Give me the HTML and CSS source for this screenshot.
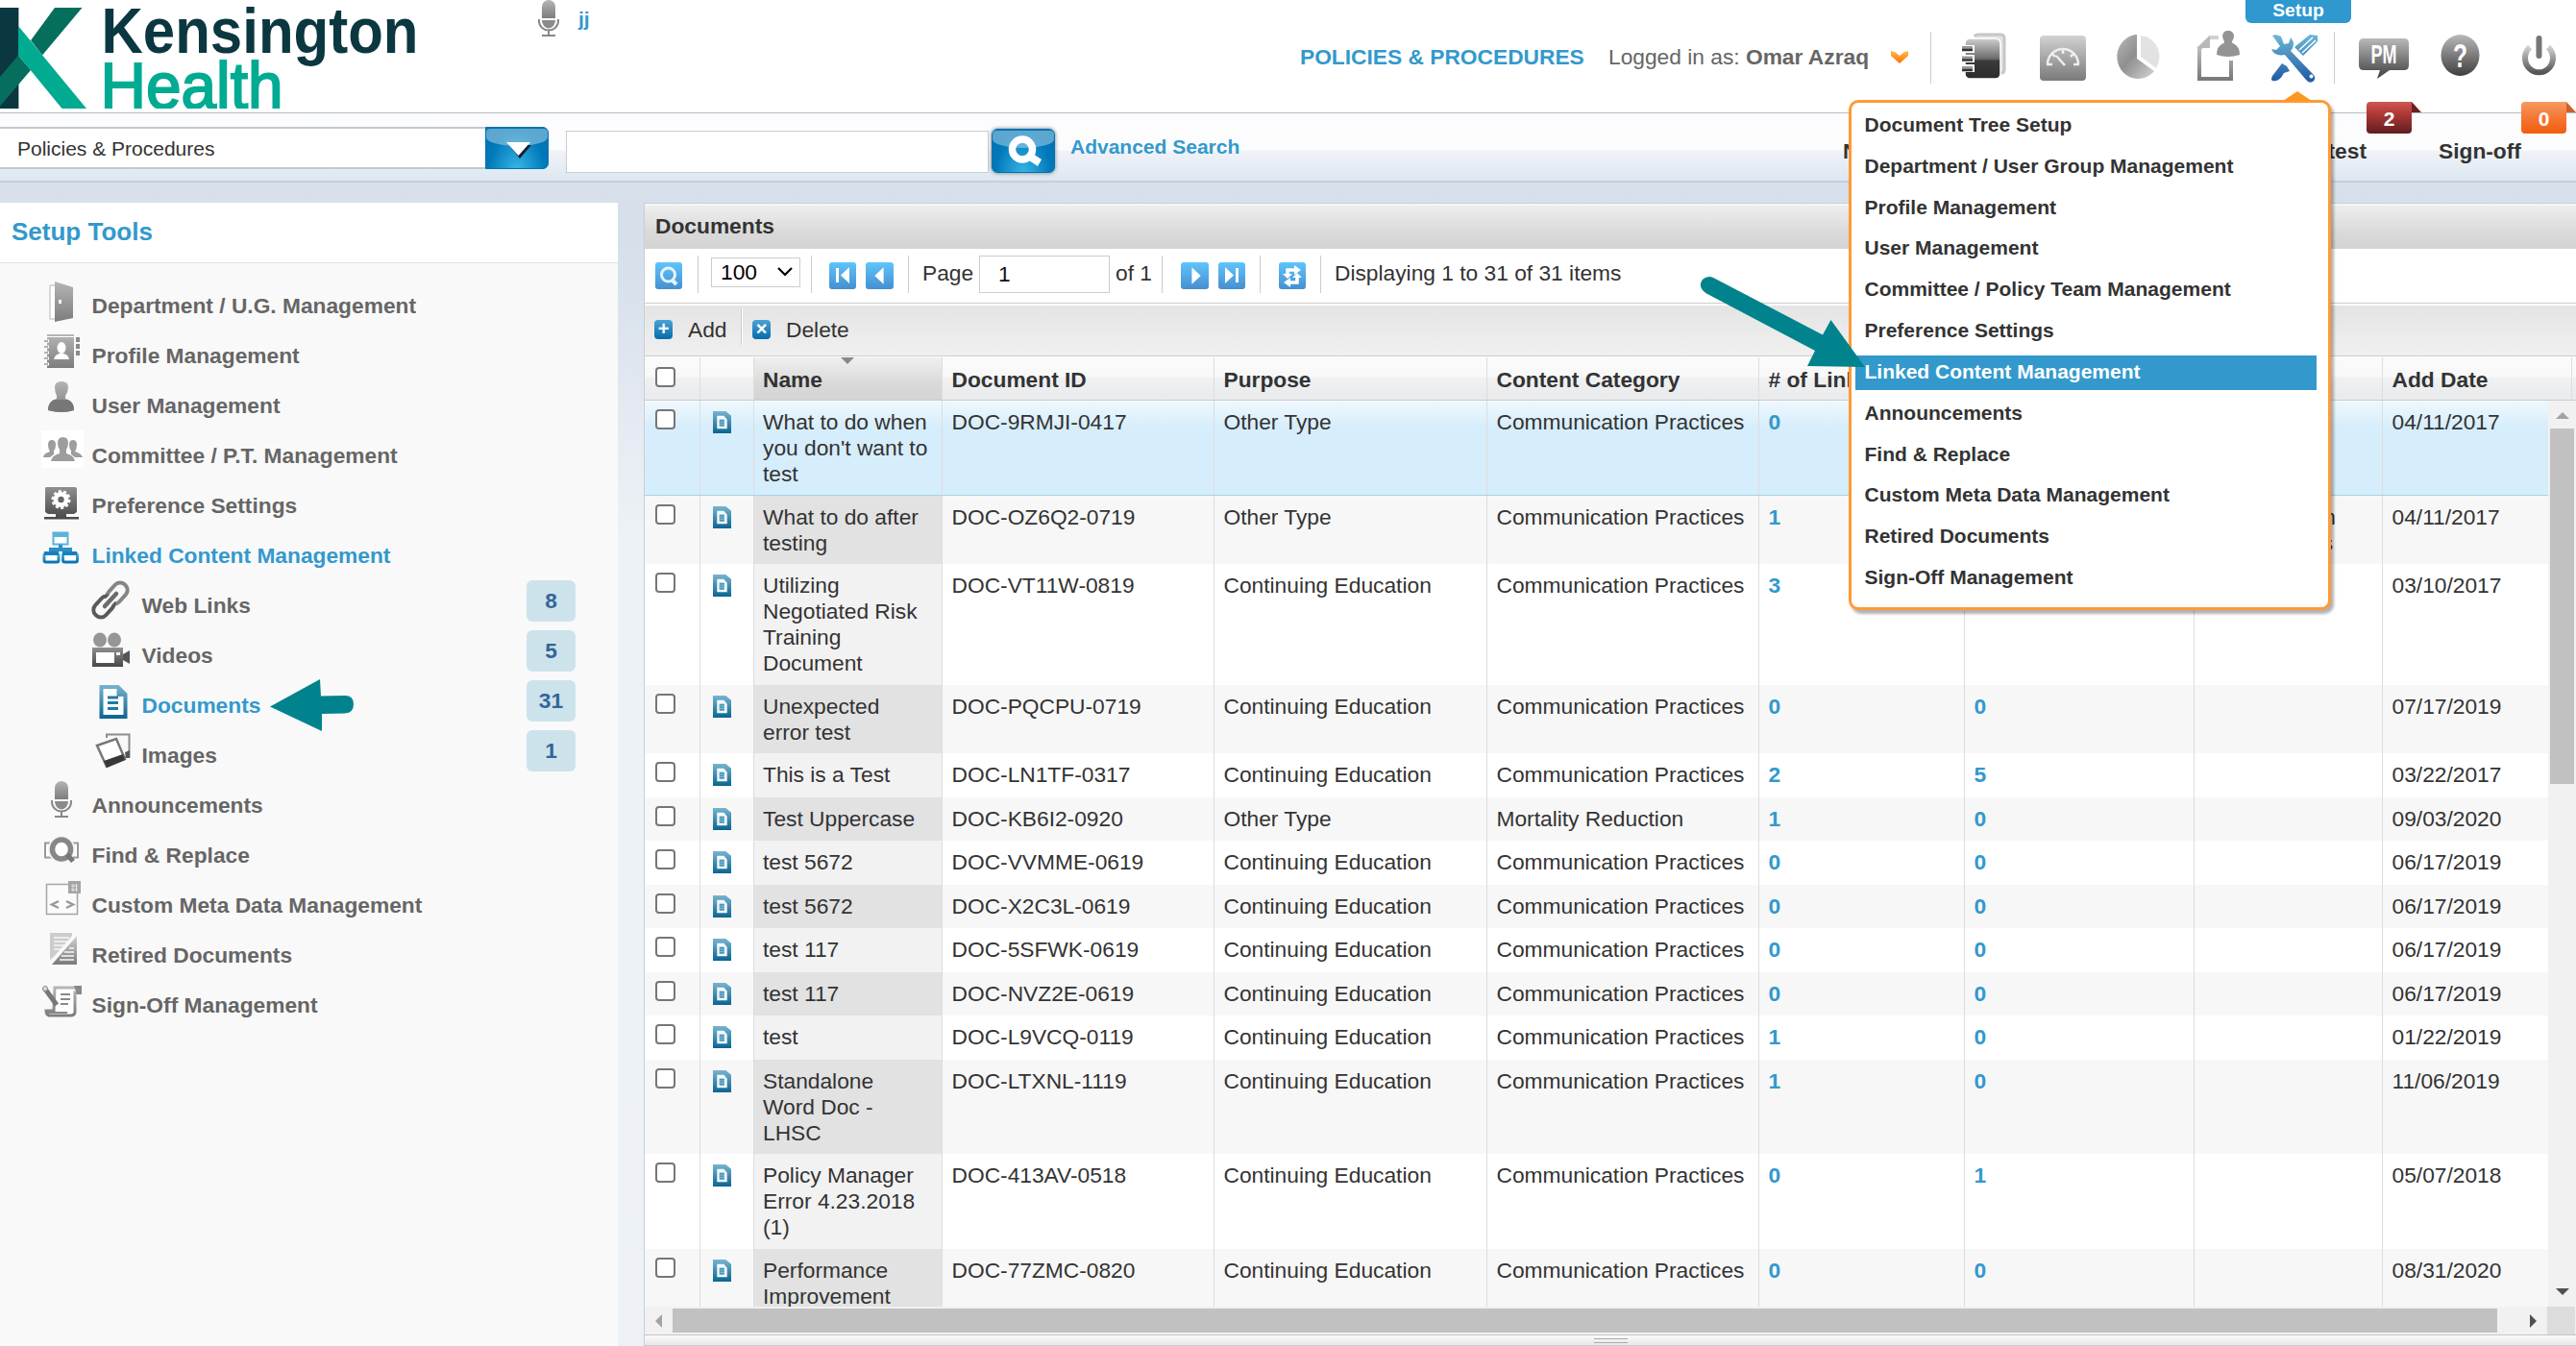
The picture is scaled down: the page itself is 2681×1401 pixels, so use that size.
FILE: index.html
```html
<!DOCTYPE html>
<html lang="en">
<head>
    <meta charset="UTF-8">
    <meta name="viewport" content="width=device-width, initial-scale=1.0">
    <title>Setup Tools - Documents</title>
    <link rel="stylesheet" href="styles.css">
</head>
<body>
    <!-- shared gradients and repeated icons -->
    <svg class="defs" width="0" height="0">
        <defs>
            <linearGradient id="grey" x1="0" y1="0" x2="0" y2="1"><stop offset="0" stop-color="#b5b5b5"/><stop offset="1" stop-color="#7d7d7d"/></linearGradient>
            <linearGradient id="dark" x1="0" y1="0" x2="0" y2="1"><stop offset="0" stop-color="#8f8f8f"/><stop offset="1" stop-color="#484848"/></linearGradient>
            <linearGradient id="bubble" x1="0" y1="0" x2="0" y2="1"><stop offset="0" stop-color="#b9b9b9"/><stop offset="1" stop-color="#3f3f3f"/></linearGradient>
            <linearGradient id="light" x1="0" y1="0" x2="0" y2="1"><stop offset="0" stop-color="#d2d2d2"/><stop offset="1" stop-color="#7a7a7a"/></linearGradient>
            <linearGradient id="book" x1="0" y1="0" x2="0" y2="1"><stop offset="0" stop-color="#cfcfcf"/><stop offset=".5" stop-color="#6c6c6c"/><stop offset=".56" stop-color="#3a3a3a"/><stop offset="1" stop-color="#2c2c2c"/></linearGradient>
            <linearGradient id="power" x1="0" y1="0" x2="0" y2="1"><stop offset="0" stop-color="#d0d0d0"/><stop offset="1" stop-color="#555"/></linearGradient>
            <linearGradient id="blue" gradientUnits="userSpaceOnUse" x1="0" y1="4" x2="0" y2="50"><stop offset="0" stop-color="#6cb8d6"/><stop offset="1" stop-color="#255fa6"/></linearGradient>
            <linearGradient id="docblue" x1="0" y1="0" x2="0" y2="1"><stop offset="0" stop-color="#78b4cf"/><stop offset="1" stop-color="#0b6591"/></linearGradient>
            <linearGradient id="sky" x1="0" y1="0" x2="0" y2="1"><stop offset="0" stop-color="#5bb3dc"/><stop offset="1" stop-color="#0b73b0"/></linearGradient>
            <linearGradient id="orange" x1="0" y1="0" x2="0" y2="1"><stop offset="0" stop-color="#fdc04d"/><stop offset="1" stop-color="#ff6a00"/></linearGradient>
            <linearGradient id="pie" x1="0" y1="0" x2="1" y2="1"><stop offset="0" stop-color="#b9b9b9"/><stop offset=".45" stop-color="#8f8f8f"/><stop offset="1" stop-color="#d5d5d5"/></linearGradient>
            <symbol id="doc" viewBox="0 0 20 24">
                <path d="M0 0h14l6 5v19H0z" fill="url(#docblue)"/>
                <path d="M4.500 5h7.500l3.500 4v10h-11z" fill="#f3fafd"/>
                <path d="M7 9h5.500v7.500H7z" fill="#4b95b8"/>
                <path d="M7 11.500h5.500M7 14h5.500" stroke="#a9cfe0" stroke-width=".7"/>
            </symbol>
            <symbol id="mic" viewBox="0 0 22 38">
                <path d="M4 19V7a7 7 0 0 1 14 0v12z" fill="url(#grey)"/>
                <path d="M4 21h14a7 8.500 0 0 1-14 0z" fill="#8b8b8b"/>
                <path d="M1 20v2a10 9.500 0 0 0 20 0v-2M11 31v5M4 37h14" fill="none" stroke="#888" stroke-width="2"/>
            </symbol>
        </defs>
    </svg>

    <header class="header">
        <svg class="logo" width="434" height="113" viewBox="0 0 434 113">
            <path d="M0 8h19.400v105H0z" fill="#0b3741"/>
            <path d="M57 8h28.500L44 57.500 32 42z" fill="#066e5c"/>
            <path d="M0 80l19-22.500L32 73 0 110.500z" fill="#066e5c"/>
            <path d="M19 27l71 86H64.500L19 57.500z" fill="#00ab92"/>
            <text class="logo-top" x="105.500" y="55" textLength="330" lengthAdjust="spacingAndGlyphs">Kensington</text>
            <text class="logo-bottom" x="104.500" y="113" textLength="190" lengthAdjust="spacingAndGlyphs">Health</text>
        </svg>
        <div class="announcement">
            <svg width="22" height="38"><use href="#mic"/></svg>
            <a>jj</a>
        </div>
        <div class="header-right">
            <span class="module">POLICIES &amp; PROCEDURES</span>
            <span class="login">Logged in as: <b>Omar Azraq</b></span>
            <svg class="chevron" width="18" height="13" viewBox="0 0 18 13"><path d="M0 0l4 1 5 4 5-4 4-1v5l-9 8-9-8z" fill="url(#orange)"/></svg>
            <span class="bar"></span>
            <svg class="tool notebook" width="52" height="54" viewBox="0 0 52 54">
                <path d="M15 6q1-2 3-2h24q4 0 4 4v33q0 3-4 3" fill="#e2e2e2" stroke="#c6c6c6" stroke-width="3"/>
                <rect x="5" y="8" width="37" height="42" rx="5" fill="url(#book)" stroke="#fff" stroke-width="1.500"/>
                <path d="M1 19h14M1 29h14M1 39h14" stroke="#fff" stroke-width="8"/>
                <path d="M2 17.500h11M2 28h11M2 38.500h11" stroke="#999" stroke-width="3"/>
                <path d="M2 20h11M2 30.500h11M2 41h11" stroke="#333" stroke-width="2.500"/>
            </svg>
            <svg class="tool gauge" width="54" height="54" viewBox="0 0 54 54">
                <rect x="3" y="5" width="48" height="47" rx="4" fill="url(#light)"/>
                <path d="M11 35a16 16 0 0 1 32 0M10 35h6M38 35h6M16 24l3 3M27 19v5M38 24l-3 3M20 26l9 10" fill="none" stroke="#eee" stroke-width="2.500"/>
            </svg>
            <svg class="tool piechart" width="50" height="54" viewBox="0 0 50 54">
                <path d="M24 4v25l18 13A22 23 0 1 1 24 4z" fill="url(#pie)"/>
                <path d="M28 5a21 22 0 0 1 16 34L28 27z" fill="#e2e2e2"/>
            </svg>
            <svg class="tool docuser" width="50" height="54" viewBox="0 0 50 54">
                <path d="M26 7H17L6 19v31h33V31" fill="none" stroke="url(#light)" stroke-width="4"/>
                <path d="M3 18L17 5v13z" fill="#b8b8b8"/>
                <path d="M30 6a6 6 0 1 1 11 3q-2 4 0 4 7 3 7 12-12 4-24 0 0-9 7-12 2 0 0-4z" fill="#949494"/>
            </svg>
            <svg class="tool tools" width="52" height="54" viewBox="0 0 52 54">
                <path d="M3 5q4-2 9 1l3 8 5-1 2-6q6 7 0 14l24 25q3 4-1 7-4 2-7-2L16 25q-11 2-14-6l5 1 4-4z" fill="url(#blue)"/>
                <path d="M26 17L42 4l8 1v6L35 26zM13 34l5 3 3 5-6 2Q10 54 3 52q-2-1 0-5z" fill="url(#blue)"/>
                <path d="M31 20L45 7M34 23L48 10" stroke="#fff" stroke-width="1.500"/>
                <circle cx="43.500" cy="47.500" r="2" fill="#fff"/>
            </svg>
            <span class="bar bar-2"></span>
            <svg class="tool pm" width="56" height="54" viewBox="0 0 56 54">
                <path d="M7 8h42q5 0 5 5v23q0 5-5 5H34l-13 9 3-9H7q-5 0-5-5V13q0-5 5-5z" fill="url(#bubble)"/>
                <text x="28" y="33.500" text-anchor="middle" textLength="27" lengthAdjust="spacingAndGlyphs">PM</text>
            </svg>
            <svg class="tool help" width="46" height="54" viewBox="0 0 46 54">
                <ellipse cx="23.500" cy="25.500" rx="20" ry="21.500" fill="url(#bubble)"/>
                <text x="23.500" y="38" text-anchor="middle" textLength="15" lengthAdjust="spacingAndGlyphs">?</text>
            </svg>
            <svg class="tool onoff" width="40" height="54" viewBox="0 0 40 54">
                <path d="M11 17a14.500 15 0 1 0 19 0" fill="none" stroke="url(#power)" stroke-width="6"/>
                <path d="M20.500 8v18" stroke="#777" stroke-width="6" stroke-linecap="round"/>
            </svg>
        </div>
        <div class="tab">Setup</div>
    </header>

    <nav class="nav">
        <div class="site-select">Policies &amp; Procedures</div>
        <div class="glossy site-arrow"><svg width="26" height="18" viewBox="0 0 26 18"><path d="M3 3h23L14 17z" fill="#123"/><path d="M0 0h25L12.500 14z" fill="#fff"/></svg></div>
        <input class="search" type="text">
        <div class="glossy search-btn"><svg width="36" height="32" viewBox="0 0 36 32"><path d="M23 17l12 8-4 7-12-8z" fill="#fff"/><ellipse cx="15" cy="14.500" rx="10.500" ry="10.500" fill="none" stroke="#fff" stroke-width="7.500"/></svg></div>
        <a class="advanced">Advanced Search</a>
        <div class="nav-links">
            <span class="nav-new">New</span>
            <span class="nav-attest">Attest</span>
            <span class="nav-sign">Sign-off</span>
        </div>
        <span class="flag flag-red">2</span>
        <span class="flag flag-orange">0</span>
    </nav>

    <main class="content">
        <aside class="sidebar">
            <h2>Setup Tools</h2>
            <ul class="side-list">
                <li>
                    <svg viewBox="0 0 44 48"><path d="M9 6h6v35H9z" fill="#fff" stroke="#b5b5b5"/><path d="M14 2l19 6v32l-19 4z" fill="url(#grey)"/><path d="M18 21h3v4h-3z" fill="#fff"/></svg>
                    <span>Department / U.G. Management</span>
                </li>
                <li>
                    <svg viewBox="0 0 44 48"><path d="M6 5h28v35H6z" fill="url(#grey)"/><path d="M5 7.500h29" stroke="#fff"/><path d="M4 12h4M4 18h4M4 24h4M4 30h4M4 36h4" stroke="#fff" stroke-width="3"/><path d="M3 12h4M3 18h4M3 24h4M3 30h4M3 36h4" stroke="#999" stroke-width="1.500"/><path d="M36 8h4v5h-4zM36 15h4v5h-4zM36 22h4v5h-4z" fill="#8a8a8a"/><ellipse cx="21" cy="19" rx="4.500" ry="6" fill="#fff"/><path d="M13 31q1-5 6-6h4q5 1 6 6z" fill="#fff"/></svg>
                    <span>Profile Management</span>
                </li>
                <li>
                    <svg viewBox="0 0 44 48"><path d="M14 8q0-6 7-6t7 6q0 5-3 9v3q9 2 9 12-12 4-27 0 0-10 9-12v-3q-2-4-2-9z" fill="url(#grey)"/><path d="M7 30q2-8 7-9h13q7 2 7 11-13 4-27 0z" fill="#777"/></svg>
                    <span>User Management</span>
                </li>
                <li>
                    <svg viewBox="0 0 44 48"><path d="M0 1h44v39H0z" fill="#fff"/><g fill="#9d9d9d"><path d="M7 16q0-5 4-5t4 5q0 4-2 6v4L9 29H2q0-4 7-6-2-3-2-7zM29 16q0-5 4-5t4 5q0 4-2 7 7 2 8 6h-8l-4-3v-4q-2-2-2-6z"/><path d="M17 14q0-6 5.500-6t5.500 6q0 4-2 7v4q8 2 9 8H10q1-6 9-8v-4q-2-3-2-7z"/></g></svg>
                    <span>Committee / P.T. Management</span>
                </li>
                <li>
                    <svg viewBox="0 0 44 48"><path d="M5 8h30q2 0 2 2v24l-3 2H7l-3-2V10q0-2 1-2zM15 36h11v3h13v2.500H3V39h12z" fill="url(#dark)"/><circle cx="20.500" cy="21" r="8" fill="#fff"/><circle cx="20.500" cy="21" r="8.500" fill="none" stroke="#fff" stroke-width="3" stroke-dasharray="3 2.300"/><circle cx="20.500" cy="21" r="3.200" fill="#666"/></svg>
                    <span>Preference Settings</span>
                </li>
                <li class="active">
                    <svg viewBox="0 0 44 48"><path d="M12.500 3.500h15v12h-15z" fill="#fff" stroke="#5bb3dc" stroke-width="2"/><path d="M12 3h16v5H12z" fill="#5bb3dc"/><path d="M20 16v4M10 24v-3h20v3" fill="none" stroke="#2b8fc9" stroke-width="4"/><rect x="3" y="25" width="15" height="9" rx="2" fill="#fff" stroke="url(#sky)" stroke-width="3"/><rect x="22.500" y="25" width="15" height="9" rx="2" fill="#fff" stroke="url(#sky)" stroke-width="3"/><path d="M3 23h15v4H3zM22 23h15v4H22z" fill="#1681bf"/></svg>
                    <span>Linked Content Management</span>
                </li>
                <li class="sub">
                    <svg viewBox="0 0 46 48"><g fill="none" stroke-width="4"><rect x="17" y="7" width="24" height="15" rx="7" transform="rotate(-48 29 14.500)" stroke="#858585"/><rect x="3" y="21" width="24" height="15" rx="7" transform="rotate(-48 15 28.500)" stroke="#5a5a5a"/></g><path d="M15 29L29 14" stroke="#f9f9f9" stroke-width="9"/><path d="M16 28L28 15" stroke="#6c6c6c" stroke-width="4.500" stroke-linecap="round"/></svg>
                    <span>Web Links</span><b class="count">8</b>
                </li>
                <li class="sub">
                    <svg viewBox="0 0 46 48"><ellipse cx="11" cy="11" rx="7" ry="7.500" fill="#969696"/><ellipse cx="26" cy="11" rx="7" ry="7.500" fill="#969696"/><path d="M3 19h32v20H3z" fill="url(#dark)"/><path d="M7 24h19v11H7z" fill="#fff"/><path d="M28 24h4v3h-4z" fill="#fff"/><path d="M35 26l7-4v14l-7-4z" fill="#555"/></svg>
                    <span>Videos</span><b class="count">5</b>
                </li>
                <li class="sub active">
                    <svg viewBox="0 0 46 48"><path d="M10.500 6h20l9 9v26h-29z" fill="url(#docblue)"/><path d="M14.500 10h14v8h7v19h-21z" fill="#fff"/><path d="M19 19h11M19 24.500h11M19 30.500h11" stroke="#1f7ba6" stroke-width="2.800"/></svg>
                    <span>Documents</span><b class="count">31</b>
                </li>
                <li class="sub">
                    <svg viewBox="0 0 46 48"><path d="M18 9V5.500h23.500V29H36" fill="none" stroke="#8b8b8b" stroke-width="2"/><path d="M37 24l5-2v8h-4z" fill="#555"/><path d="M8 17l20-7 9 21-19 8z" fill="#fff" stroke="#777" stroke-width="2.500"/><path d="M15 33l20-7 2 6-19 8z" fill="#383838"/></svg>
                    <span>Images</span><b class="count">1</b>
                </li>
                <li>
                    <svg viewBox="0 0 44 48"><use href="#mic" x="10" y="2" width="22" height="38"/></svg>
                    <span>Announcements</span>
                </li>
                <li>
                    <svg viewBox="0 0 44 48"><path d="M4 14.500h34v15H4z" fill="#fff" stroke="#999" stroke-width="2"/><ellipse cx="21" cy="21" rx="10" ry="10.500" fill="#fff" stroke="#f4f4f4" stroke-width="8"/><ellipse cx="21" cy="21" rx="9.500" ry="10" fill="#fff" stroke="#878787" stroke-width="5.500"/><path d="M25 28l4-3 6 7-4 3z" fill="#777"/></svg>
                    <span>Find &amp; Replace</span>
                </li>
                <li>
                    <svg viewBox="0 0 44 48"><path d="M5.500 5.500h32v31h-32z" fill="#fbfbfb" stroke="#a5a5a5" stroke-width="1.500"/><path d="M28 2h13v13H28z" fill="#a5a5a5"/><path d="M31 7h7M31 11h7M33 5v8M36.500 5v8" stroke="#e5e5e5"/><path d="M18 23l-7 3.500 7 3.500M26 23l7 3.500-7 3.500" fill="none" stroke="#999" stroke-width="2.500"/></svg>
                    <span>Custom Meta Data Management</span>
                </li>
                <li>
                    <svg viewBox="0 0 44 48"><path d="M9 4h23v3L13 29l-4 3z" fill="#ccc"/><path d="M11 37h26V7L24 22z" fill="url(#light)"/><path d="M13 9h16M13 13h16M13 17h12M13 21h8M29 20h5M24 24h10M21 28h13M19 32h15" stroke="#f8f8f8" stroke-width="1.500"/><path d="M37 5L9 35" stroke="#f9f9f9" stroke-width="2"/></svg>
                    <span>Retired Documents</span>
                </li>
                <li>
                    <svg viewBox="0 0 44 48"><path d="M14 9h26v5h-5v21q-1 3-4 3H8q-3-1-3-5h8z" fill="#fff" stroke="url(#grey)" stroke-width="3"/><path d="M34 7h8v9h-5z" fill="#888"/><path d="M20 16h10M20 21h10M20 26h8M6 35h21" stroke="#888" stroke-width="2"/><path d="M3 9l13 18" stroke="#777" stroke-width="5"/><circle cx="4" cy="10" r="2.500" fill="#ddd" stroke="#888"/></svg>
                    <span>Sign-Off Management</span>
                </li>
            </ul>
        </aside>

        <section class="panel">
            <h3>Documents</h3>
            <div class="pager">
                <span class="pbtn"><svg viewBox="0 0 28 28"><circle cx="13.500" cy="13" r="7" fill="none" stroke="#e4f3fc" stroke-width="3"/><path d="M17 18l5 5" stroke="#e4f3fc" stroke-width="4"/></svg></span>
                <i class="sep s1"></i>
                <span class="page-size">100<svg width="16" height="10" viewBox="0 0 16 10"><path d="M1 1l7 7 7-7" fill="none" stroke="#000" stroke-width="2.200"/></svg></span>
                <i class="sep s2"></i>
                <span class="pbtn p-first"><svg viewBox="0 0 28 28"><path d="M7 6h3v15H7zM21 5v17l-9-8.500z" fill="#fff"/></svg></span>
                <span class="pbtn p-prev"><svg viewBox="0 0 28 28"><path d="M18 5v17l-9-8.500z" fill="#fff"/></svg></span>
                <i class="sep s3"></i>
                <span class="page-label">Page</span>
                <span class="page-no">1</span>
                <span class="page-of">of 1</span>
                <i class="sep s4"></i>
                <span class="pbtn p-next"><svg viewBox="0 0 28 28"><path d="M11 5v17l9-8.500z" fill="#fff"/></svg></span>
                <span class="pbtn p-last"><svg viewBox="0 0 28 28"><path d="M18 6h3v15h-3zM7 5v17l9-8.500z" fill="#fff"/></svg></span>
                <i class="sep s5"></i>
                <span class="pbtn p-load"><svg viewBox="0 0 28 28"><path d="M9 13V8h9M19 15v6h-9" fill="none" stroke="#fff" stroke-width="3.500"/><path d="M16 3l7 5-7 5zM12 16l-7 5 7 5zM4 12h10l-5 5zM14 16h10l-5-5z" fill="#fff"/></svg></span>
                <i class="sep s6"></i>
                <span class="page-stat">Displaying 1 to 31 of 31 items</span>
            </div>
            <div class="actions">
                <span class="abtn">+</span><span class="add">Add</span>
                <i class="sep s7"></i>
                <span class="abtn">×</span><span>Delete</span>
            </div>
            <div class="thead row">
                <div><i class="check"></i></div><div></div><div class="name"><svg class="sort" width="14" height="7"><path d="M0 0h14L7 7z" fill="#888"/></svg>Name</div><div>Document ID</div><div>Purpose</div><div>Content Category</div><div># of Linked</div><div></div><div></div><div>Add Date</div><div></div>
            </div>
            <div class="tbody-wrap">
                <div class="tbody">
                    <div class="row l3 selected"><div><i class="check"></i></div><div><svg class="doc"><use href="#doc"/></svg></div><div class="name">What to do when<br>you don't want to<br>test</div><div>DOC-9RMJI-0417</div><div>Other Type</div><div>Communication Practices</div><div><b>0</b></div><div></div><div></div><div>04/11/2017</div></div>
                    <div class="row l2"><div><i class="check"></i></div><div><svg class="doc"><use href="#doc"/></svg></div><div class="name">What to do after<br>testing</div><div>DOC-OZ6Q2-0719</div><div>Other Type</div><div>Communication Practices</div><div><b>1</b></div><div></div><div class="tail">n<br><span>s</span></div><div>04/11/2017</div></div>
                    <div class="row l4"><div><i class="check"></i></div><div><svg class="doc"><use href="#doc"/></svg></div><div class="name">Utilizing<br>Negotiated Risk<br>Training<br>Document</div><div>DOC-VT11W-0819</div><div>Continuing Education</div><div>Communication Practices</div><div><b>3</b></div><div></div><div></div><div>03/10/2017</div></div>
                    <div class="row l2"><div><i class="check"></i></div><div><svg class="doc"><use href="#doc"/></svg></div><div class="name">Unexpected<br>error test</div><div>DOC-PQCPU-0719</div><div>Continuing Education</div><div>Communication Practices</div><div><b>0</b></div><div><b>0</b></div><div></div><div>07/17/2019</div></div>
                    <div class="row"><div><i class="check"></i></div><div><svg class="doc"><use href="#doc"/></svg></div><div class="name">This is a Test</div><div>DOC-LN1TF-0317</div><div>Continuing Education</div><div>Communication Practices</div><div><b>2</b></div><div><b>5</b></div><div></div><div>03/22/2017</div></div>
                    <div class="row"><div><i class="check"></i></div><div><svg class="doc"><use href="#doc"/></svg></div><div class="name">Test Uppercase</div><div>DOC-KB6I2-0920</div><div>Other Type</div><div>Mortality Reduction</div><div><b>1</b></div><div><b>0</b></div><div></div><div>09/03/2020</div></div>
                    <div class="row"><div><i class="check"></i></div><div><svg class="doc"><use href="#doc"/></svg></div><div class="name">test 5672</div><div>DOC-VVMME-0619</div><div>Continuing Education</div><div>Communication Practices</div><div><b>0</b></div><div><b>0</b></div><div></div><div>06/17/2019</div></div>
                    <div class="row"><div><i class="check"></i></div><div><svg class="doc"><use href="#doc"/></svg></div><div class="name">test 5672</div><div>DOC-X2C3L-0619</div><div>Continuing Education</div><div>Communication Practices</div><div><b>0</b></div><div><b>0</b></div><div></div><div>06/17/2019</div></div>
                    <div class="row"><div><i class="check"></i></div><div><svg class="doc"><use href="#doc"/></svg></div><div class="name">test 117</div><div>DOC-5SFWK-0619</div><div>Continuing Education</div><div>Communication Practices</div><div><b>0</b></div><div><b>0</b></div><div></div><div>06/17/2019</div></div>
                    <div class="row"><div><i class="check"></i></div><div><svg class="doc"><use href="#doc"/></svg></div><div class="name">test 117</div><div>DOC-NVZ2E-0619</div><div>Continuing Education</div><div>Communication Practices</div><div><b>0</b></div><div><b>0</b></div><div></div><div>06/17/2019</div></div>
                    <div class="row"><div><i class="check"></i></div><div><svg class="doc"><use href="#doc"/></svg></div><div class="name">test</div><div>DOC-L9VCQ-0119</div><div>Continuing Education</div><div>Communication Practices</div><div><b>1</b></div><div><b>0</b></div><div></div><div>01/22/2019</div></div>
                    <div class="row l3"><div><i class="check"></i></div><div><svg class="doc"><use href="#doc"/></svg></div><div class="name">Standalone<br>Word Doc -<br>LHSC</div><div>DOC-LTXNL-1119</div><div>Continuing Education</div><div>Communication Practices</div><div><b>1</b></div><div><b>0</b></div><div></div><div>11/06/2019</div></div>
                    <div class="row l3"><div><i class="check"></i></div><div><svg class="doc"><use href="#doc"/></svg></div><div class="name">Policy Manager<br>Error 4.23.2018<br>(1)</div><div>DOC-413AV-0518</div><div>Continuing Education</div><div>Communication Practices</div><div><b>0</b></div><div><b>1</b></div><div></div><div>05/07/2018</div></div>
                    <div class="row l2"><div><i class="check"></i></div><div><svg class="doc"><use href="#doc"/></svg></div><div class="name">Performance<br>Improvement</div><div>DOC-77ZMC-0820</div><div>Continuing Education</div><div>Communication Practices</div><div><b>0</b></div><div><b>0</b></div><div></div><div>08/31/2020</div></div>
                </div>
                <div class="vscroll">
                    <svg width="14" height="7"><path d="M0 7h14L7 0z" fill="#a3a3a3"/></svg>
                    <div class="vthumb"></div>
                    <svg class="down" width="14" height="7"><path d="M0 0h14L7 7z" fill="#505050"/></svg>
                </div>
            </div>
            <div class="hscroll">
                <svg width="7" height="14"><path d="M7 0v14L0 7z" fill="#a3a3a3"/></svg>
                <div class="hthumb"></div>
                <svg class="right" width="7" height="14"><path d="M0 0v14l7-7z" fill="#505050"/></svg>
                <div class="corner"></div>
            </div>
            <div class="grip"><span></span></div>
        </section>
    </main>

    <div class="menu">
        <svg class="menu-arrow" width="30" height="10"><path d="M0 10L15 0l15 10z" fill="#ff961f"/></svg>
        <a>Document Tree Setup</a>
        <a>Department / User Group Management</a>
        <a>Profile Management</a>
        <a>User Management</a>
        <a>Committee / Policy Team Management</a>
        <a>Preference Settings</a>
        <a class="current">Linked Content Management</a>
        <a>Announcements</a>
        <a>Find &amp; Replace</a>
        <a>Custom Meta Data Management</a>
        <a>Retired Documents</a>
        <a>Sign-Off Management</a>
    </div>

    <!-- callout arrows -->
    <svg class="callout callout-side" width="90" height="56" viewBox="0 0 90 56">
        <path d="M0 29.500L52 1l1 17.500 25-.5q9 0 9 9t-9 9.500l-24 .5V55z" fill="#00838c"/>
    </svg>
    <svg class="callout callout-menu" width="176" height="100" viewBox="0 0 176 100">
        <path d="M14 1q3 0 6 2l112 58.500 8.500-15.500L176 95l-60-1 8-16L11 18.500Q4 14 5 8t9-7z" fill="#00838c"/>
    </svg>
</body>
</html>
```

FILE: styles.css
```css
* {
    box-sizing: border-box;
}
body {
    margin: 0;
    width: 2681px;
    height: 1401px;
    overflow: hidden;
    position: relative;
    font-family: "Liberation Sans", Arial, sans-serif;
    font-size: 22.75px;
    line-height: 26px;
    color: #333;
    background: #fff;
    white-space: nowrap;
}
svg {
    display: block;
    flex: none;
}
.defs {
    position: absolute;
}

/* header */
.header {
    position: relative;
    display: flex;
    align-items: flex-start;
    height: 118px;
    border-bottom: 1px solid #b9bbbf;
}
.logo-top {
    font-size: 67px;
    font-weight: bold;
    fill: #0b3741;
}
.logo-bottom {
    font-size: 68px;
    fill: #00ab92;
    stroke: #00ab92;
    stroke-width: 2px;
}
.announcement {
    display: flex;
    gap: 20px;
    margin-left: 126px;
    color: #39c;
    font-size: 21px;
    font-weight: bold;
}
.announcement a {
    padding-top: 7px;
}
.header-right {
    display: flex;
    width: 1328px;
    margin-left: auto;
}
.module {
    width: 321px;
    padding-top: 46px;
    font-weight: bold;
    color: #39c;
}
.login {
    width: 294px;
    padding-top: 46px;
    color: #666;
}
.chevron {
    margin-top: 53px;
}
.bar {
    width: 1px;
    height: 54px;
    margin: 33px 0 0 23px;
    background: #ccc;
}
.bar-2 {
    margin-left: 15px;
}
.tool {
    margin-top: 32px;
}
.notebook { margin-left: 30px; }
.gauge { margin-left: 28px; }
.piechart { margin-left: 26px; }
.docuser { margin-left: 33px; }
.tools { margin-left: 29px; }
.pm { margin-left: 23px; }
.help { margin-left: 28px; }
.onoff { margin-left: 39px; }
.pm text {
    font-size: 28px;
    font-weight: bold;
    fill: #fff;
}
.help text {
    font-size: 35px;
    font-weight: bold;
    fill: #fff;
}
.tab {
    position: absolute;
    left: 2337px;
    top: 0;
    width: 110px;
    height: 24px;
    border-radius: 0 0 6px 6px;
    background: #2f98cf;
    color: #fff;
    font-size: 19.25px;
    font-weight: bold;
    line-height: 21px;
    text-align: center;
}

/* search bar */
.nav {
    position: relative;
    display: flex;
    align-items: flex-start;
    height: 72px;
    border-bottom: 2px solid #c4d0dc;
    background: linear-gradient(#fafbff, #fdfdfe 15px, #fbfcfd 38px, #f0f3f8 39px, #dce7f1 70px);
}
.site-select {
    width: 505px;
    height: 44px;
    margin-top: 14px;
    padding: 9px 0 0 18px;
    border: solid #c6c8ca;
    border-width: 2px 0;
    background: #fff;
    font-size: 21px;
    line-height: 24px;
}
.glossy {
    display: flex;
    align-items: center;
    justify-content: center;
    position: relative;
    width: 66px;
    background: radial-gradient(ellipse at 50% 110%, #3bb8e8, #0078b9 65%, #0071b2);
    border: 1px solid #0073b0;
}
.glossy::before {
    content: "";
    position: absolute;
    left: 0;
    right: 0;
    top: 1px;
    height: 18px;
    border-radius: 4px 4px 50% 50%;
    background: rgba(255, 255, 255, .36);
}
.glossy svg {
    position: relative;
}
.site-arrow {
    height: 44px;
    margin-top: 14px;
    padding: 5px 0 0 3px;
    border-radius: 0 6px 6px 0;
}
.search {
    width: 440px;
    height: 44px;
    margin: 18px 0 0 18px;
    border: 1px solid #ccc;
}
.search-btn {
    height: 46px;
    margin: 16px 0 0 3px;
    padding-left: 4px;
    border-radius: 6px;
    box-shadow: 0 0 4px #777;
}
.advanced {
    margin: 22px 0 0 16px;
    color: #39c;
    font-size: 21px;
    font-weight: bold;
}
.nav-links {
    display: flex;
    width: 763px;
    margin: 26px 0 0 auto;
    font-weight: bold;
}
.nav-new {
    width: 473px;
}
.nav-attest {
    width: 72px;
    text-align: right;
}
.nav-sign {
    margin-left: 75px;
}
.flag {
    position: absolute;
    top: -12px;
    width: 47px;
    height: 33px;
    border-radius: 4px 0 4px 4px;
    color: #fff;
    font-size: 21px;
    font-weight: bold;
    line-height: 35px;
    text-align: center;
}
.flag::after {
    content: "";
    position: absolute;
    left: 47px;
    top: 0;
    width: 10px;
    height: 11px;
    clip-path: polygon(0 0, 100% 100%, 0 100%);
}
.flag-red {
    left: 2463px;
    background: linear-gradient(#cc5753, #b43a38 35%, #5e1d1f);
}
.flag-red::after {
    background: #6d1f20;
}
.flag-orange {
    left: 2624px;
    background: linear-gradient(#f79a62, #f47a38 45%, #f25c0e);
}
.flag-orange::after {
    background: #d0602a;
}

/* content area */
.content {
    display: flex;
    height: 1211px;
    padding-top: 21px;
    background: linear-gradient(#d7e0eb, #d6dfea 21px, #d6e1eb 90px, #e5e9f2 240px, #edf2f6 370px, #eef2f7);
}
.sidebar {
    width: 643px;
    background: #f9f9f9;
}
.sidebar h2 {
    height: 63px;
    margin: 0;
    padding: 17px 12px;
    border-bottom: 1px solid #e2e2e2;
    background: #fff;
    color: #39c;
    font-size: 26px;
    line-height: 26px;
}
.side-list {
    margin: 0;
    padding: 17px 0 0;
    list-style: none;
    font-weight: bold;
    color: #666;
}
.side-list li {
    display: flex;
    gap: 8.5px;
    height: 52px;
    padding-left: 43px;
}
.side-list svg {
    width: 44px;
    height: 48px;
}
.side-list span {
    padding-top: 14px;
}
.side-list .sub {
    padding-left: 93px;
    padding-right: 44px;
}
.side-list .sub svg {
    width: 46px;
}
.side-list .active {
    color: #39c;
}
.count {
    width: 51px;
    height: 43px;
    margin: 1px 0 0 auto;
    border-radius: 6px;
    background: #cde3eb;
    color: #369;
    line-height: 42px;
    text-align: center;
}

/* documents grid */
.panel {
    display: flex;
    flex: none;
    flex-direction: column;
    width: 2011px;
    margin-left: 27px;
    border: 1px solid #c9ced3;
    border-right: 0;
    background: #fff;
}
.panel h3 {
    height: 47px;
    margin: 0;
    padding: 8px 11px;
    border-top: 2px solid #f5f5f5;
    background: linear-gradient(#eee, #d9d9d9 65%, #d4d4d4);
    font-size: 22.75px;
    line-height: 26px;
}
.pager {
    display: flex;
    align-items: flex-start;
    height: 57px;
    padding: 7px 0 0 11px;
    border-bottom: 1px solid #ccc;
}
.pbtn {
    width: 28px;
    height: 28px;
    margin-top: 7px;
    border-radius: 3px;
    background: linear-gradient(#5fc4fb, #468fd0);
}
.sep {
    flex: none;
    width: 1px;
    height: 39px;
    background: #ccc;
}
.s1 { margin: 0 13px 0 16px; }
.s2 { margin: 0 18px 0 11px; }
.s3 { margin: 0 14px 0 15px; }
.s4 { margin: 0 19px 0 12px; }
.s5 { margin: 0 19px 0 15px; }
.s6 { margin: 0 14px 0 15px; }
.page-size {
    display: flex;
    align-items: center;
    justify-content: space-between;
    width: 93px;
    height: 31px;
    margin-top: 2px;
    padding: 0 7px 0 9px;
    border: 1px solid #ccc;
    color: #000;
}
.p-prev, .p-next {
    width: 29px;
}
.p-prev { margin-left: 10px; }
.p-last { margin-left: 10px; }
.page-label, .page-of, .page-stat {
    padding-top: 5px;
}
.page-label {
    width: 59px;
}
.page-no {
    width: 136px;
    height: 39px;
    padding: 5px 19px;
    border: 1px solid #ccc;
    color: #111;
}
.page-of {
    width: 42px;
    padding-left: 6px;
}
.actions {
    display: flex;
    height: 56px;
    padding: 2px 0 0 10px;
    border-top: 2px solid #fff;
    border-bottom: 1px solid #ccc;
    background: linear-gradient(#e4e4e4, #f0f0f0);
}
.abtn {
    width: 19px;
    height: 20px;
    margin: 13px 16px 0 0;
    border-radius: 4px;
    background: linear-gradient(#4ba3d3, #066bab);
    color: #fff;
    font-size: 20px;
    font-weight: bold;
    line-height: 18px;
    text-align: center;
}
.actions span:not(.abtn) {
    padding-top: 10px;
}
.add {
    width: 55px;
}
.s7 {
    margin-right: 11px;
    box-shadow: 1px 0 #fff;
}
.row {
    display: grid;
    grid-template-columns: 57px 56px 196px 283px 284px 283px 214px 239px 196px 1fr;
    height: 45.57px;
    padding-left: 1px;
    line-height: 27px;
    background: #fff;
}
.row > div {
    padding: 9px 0 0 9.5px;
    border-right: 1px solid #ddd;
    overflow: hidden;
    position: relative;
}
.row > div:last-child {
    border-right: 0;
}
.row b {
    color: #39c;
}
.row:nth-child(even) { background: #f7f7f7; }
.row .name { background: #f2f2f2; padding-left: 9px; }
.row:nth-child(even) .name { background: #e2e2e2; }
.l2 { height: 71px; }
.l3 { height: 98.5px; }
.l4 { height: 126px; }
.row.selected {
    height: 99px;
    border-bottom: 1px solid #a5d4ea;
    background: linear-gradient(#f0f8fe, #d6edfb 28px);
}
.row.selected .name {
    background: none;
}
.row.thead {
    grid-template-columns: 57px 56px 196px 283px 284px 283px 214px 239px 196px 197px 1fr;
    height: 46px;
    border-bottom: 1px solid #ccc;
    border-top: 1px solid #fff;
    background: linear-gradient(#fbfbfb, #f8f8f8 20px, #f0f1f3 21px, #e9eaec);
    font-weight: bold;
}
.thead.row > div {
    padding-top: 10px;
}
.row.thead .name {
    background: linear-gradient(#efefef, #d9d9d9 65%, #d4d4d4);
}
.sort {
    position: absolute;
    left: 90px;
    top: 0;
}
.check {
    display: block;
    width: 21px;
    height: 21px;
    border: 2px solid #767676;
    border-radius: 4px;
    background: #fff;
}
.doc {
    width: 19px;
    height: 23px;
    margin: 2px 0 0 3px;
}
.row .tail {
    padding-right: 48px;
    text-align: right;
}
.tail span {
    margin-right: 3px;
}
.tbody-wrap {
    display: flex;
    height: 943px;
}
.tbody {
    width: 1981px;
    overflow: hidden;
}
.vscroll {
    display: flex;
    flex-direction: column;
    align-items: center;
    width: 29px;
    padding: 12px 0;
    background: #f1f1f1;
}
.vthumb {
    width: 25px;
    height: 370px;
    margin-top: 10px;
    background: #c1c1c1;
}
.down {
    margin-top: auto;
}
.hscroll {
    display: flex;
    align-items: center;
    height: 29px;
    padding-left: 11px;
    background: #f1f1f1;
}
.hthumb {
    width: 1899px;
    height: 25px;
    margin-left: 11px;
    background: #c1c1c1;
}
.right {
    margin-left: 34px;
}
.corner {
    width: 29px;
    height: 29px;
    margin-left: 11px;
    background: #dcdcdc;
}
.grip {
    display: flex;
    justify-content: center;
    height: 11px;
    padding-top: 3px;
    border-top: 1px solid #c5c5c5;
    background: linear-gradient(#fafafa, #e8e8e8);
}
.grip span {
    width: 35px;
    height: 5px;
    border: solid #aaa;
    border-width: 1px 0;
}

/* setup dropdown */
.menu {
    position: absolute;
    left: 1924px;
    top: 104px;
    display: flex;
    flex-direction: column;
    gap: 6.83px;
    width: 502px;
    height: 531px;
    padding: 6px 12px 0 4px;
    border: 3px solid #ff9a38;
    border-radius: 10px;
    background: #fff;
    box-shadow: 3px 4px 3px rgba(0, 0, 0, .3);
    font-size: 21px;
    font-weight: bold;
}
.menu a {
    height: 36px;
    padding-left: 9.5px;
    line-height: 34.5px;
}
.menu .current {
    background: #39c;
    color: #fff;
}
.menu-arrow {
    position: absolute;
    left: 449px;
    top: -12px;
}
.callout {
    position: absolute;
}
.callout-side {
    left: 281px;
    top: 706px;
}
.callout-menu {
    left: 1765px;
    top: 287px;
}
```
